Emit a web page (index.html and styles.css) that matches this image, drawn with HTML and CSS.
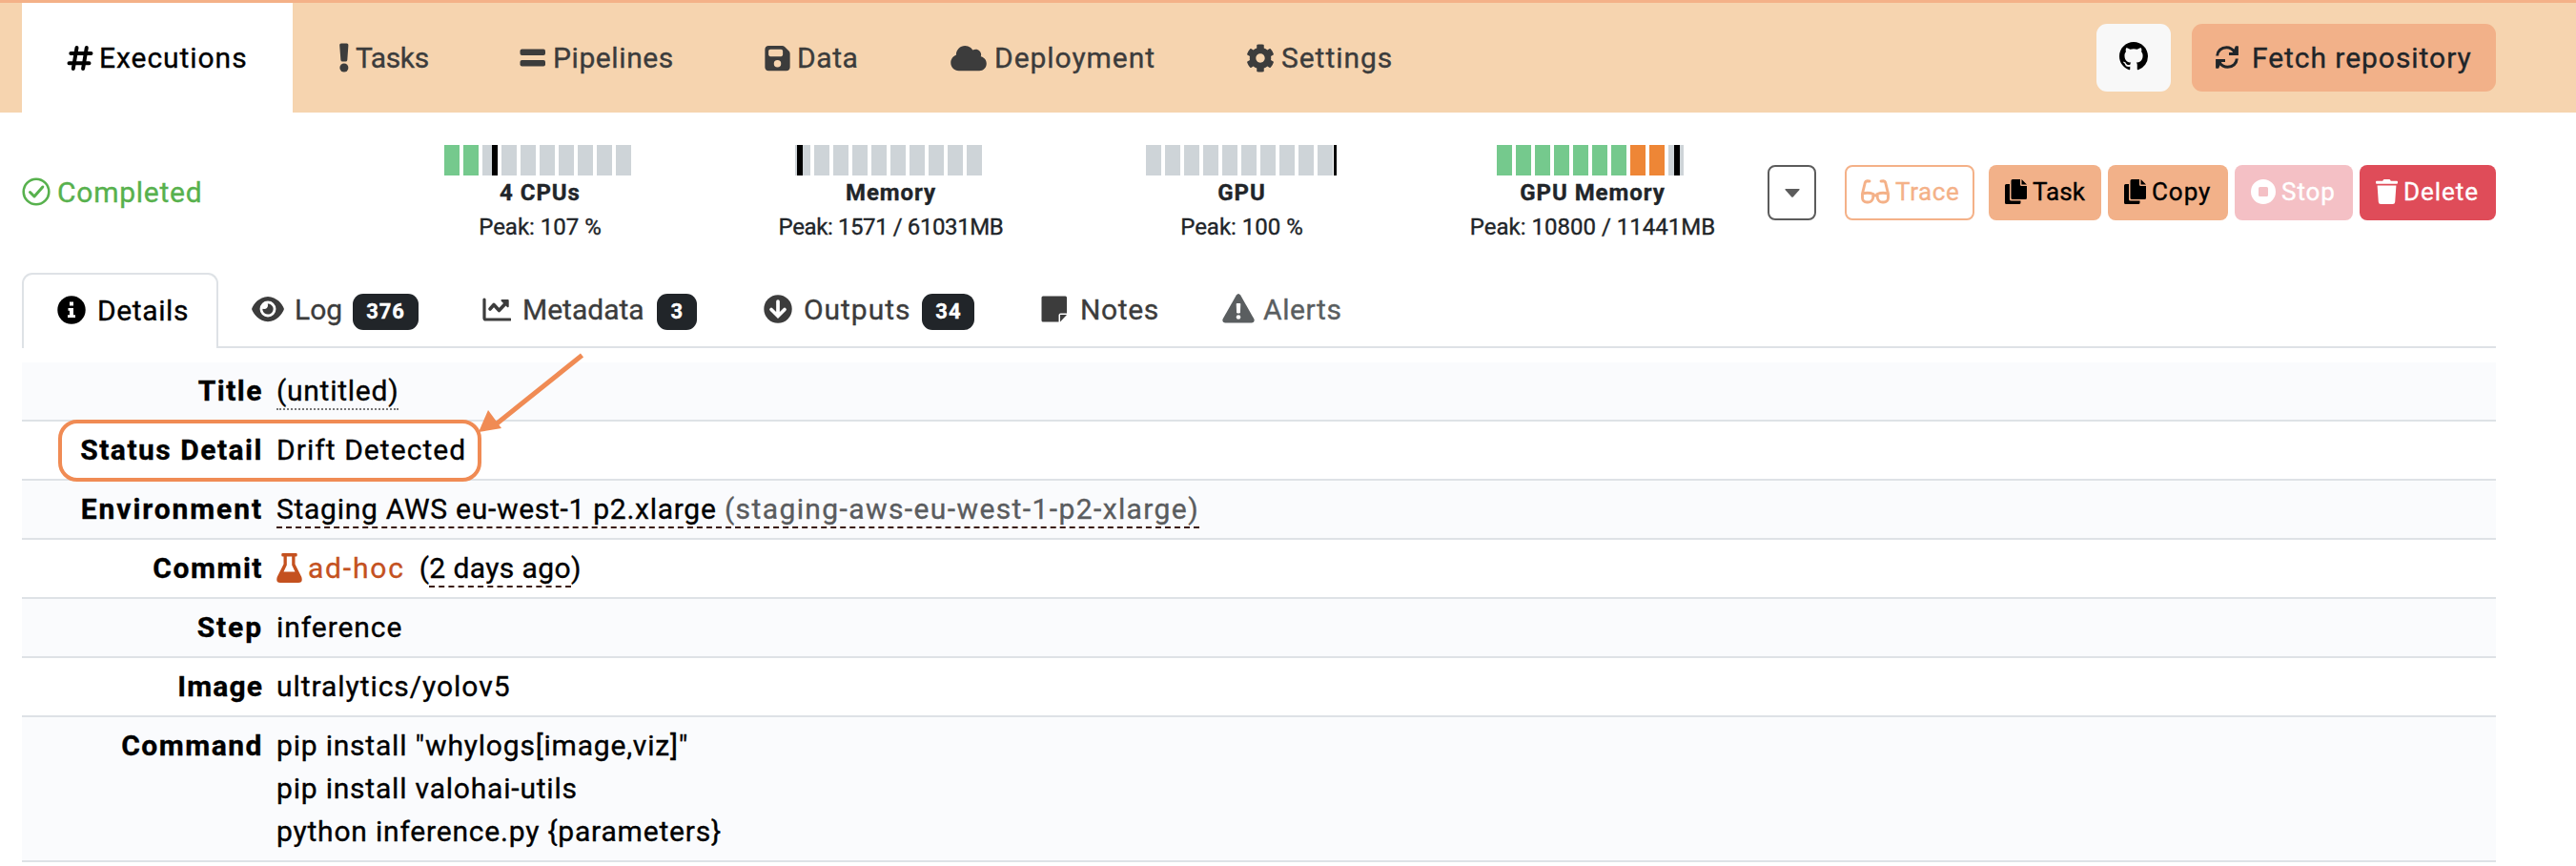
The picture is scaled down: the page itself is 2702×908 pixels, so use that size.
FILE: index.html
```
<!DOCTYPE html>
<html lang="en">
<head>
<meta charset="utf-8">
<title>Execution details</title>
<link rel="stylesheet" href="styles.css">
</head>
<body>
<header class="header">
  <nav class="nav">
    <a class="nav-item active w-exec"><svg width="28" height="30" viewBox="0 0 28 30" fill="none" stroke="currentColor" stroke-width="4" stroke-linecap="round"><path d="M10.5 4 6.8 26M20.8 4 17.1 26M4.3 10H25.5M2.5 20.3H23.5"/></svg><span>Executions</span></a>
    <a class="nav-item w-tasks"><svg width="12" height="31" viewBox="0 0 12 31" fill="currentColor"><path d="M3 .5h5.600a1.800 1.800 0 0 1 1.800 2L9.300 18a1.800 1.800 0 0 1-1.800 1.500H4.200A1.800 1.800 0 0 1 2.400 18L1.200 2.500A1.800 1.800 0 0 1 3 .5z"/><circle cx="5.900" cy="26" r="4.500"/></svg><span class="tight">Tasks</span></a>
    <a class="nav-item w-pipe"><svg width="28" height="30" viewBox="0 0 28 30" fill="currentColor"><rect x=".5" y="5.500" width="26.500" height="6.500" rx="2"/><rect x=".5" y="17" width="26.500" height="6.500" rx="2"/></svg><span class="snug">Pipelines</span></a>
    <a class="nav-item w-data"><svg width="27" height="30" viewBox="0 0 448 512" fill="currentColor"><path d="M64 32C28.700 32 0 60.700 0 96V416c0 35.300 28.700 64 64 64H384c35.300 0 64-28.700 64-64V173.300c0-17-6.700-33.300-18.700-45.300L352 50.700C340 38.700 323.700 32 306.700 32H64zm0 96c0-17.700 14.300-32 32-32H288c17.700 0 32 14.300 32 32v64c0 17.700-14.300 32-32 32H96c-17.700 0-32-14.300-32-32V128zM224 288a64 64 0 1 1 0 128 64 64 0 1 1 0-128z" fill-rule="evenodd"/></svg><span class="snug">Data</span></a>
    <a class="nav-item w-deploy"><svg width="38" height="30" viewBox="0 0 640 512" fill="currentColor"><path d="M0 336c0 79.500 64.500 144 144 144H512c70.700 0 128-57.300 128-128c0-61.900-44-113.600-102.400-125.400c4.100-10.700 6.400-22.400 6.400-34.600c0-53-43-96-96-96c-19.700 0-38.100 6-53.300 16.200C367 64.200 315.300 32 256 32C167.600 32 96 103.600 96 192c0 2.700 .1 5.400 .2 8.100C40.200 219.800 0 273.200 0 336z"/></svg><span>Deployment</span></a>
    <a class="nav-item w-settings"><svg width="30" height="30" viewBox="0 0 512 512" fill="currentColor"><path d="M487.400 315.700l-42.600-24.600c4.300-23.200 4.300-47 0-70.200l42.600-24.600c4.900-2.800 7.100-8.600 5.500-14-11.100-35.600-30-67.800-54.700-94.600-3.800-4.100-10-5.100-14.800-2.300L380.800 110c-17.900-15.400-38.500-27.300-60.800-35.100V25.800c0-5.600-3.900-10.500-9.400-11.700-36.700-8.200-74.300-7.800-109.200 0-5.500 1.200-9.400 6.100-9.400 11.700V75c-22.200 7.900-42.800 19.800-60.800 35.100L88.700 85.500c-4.900-2.800-11-1.900-14.800 2.300-24.700 26.700-43.600 58.900-54.700 94.600-1.700 5.400.6 11.200 5.500 14L67.300 221c-4.300 23.200-4.300 47 0 70.200l-42.600 24.600c-4.900 2.800-7.100 8.600-5.500 14 11.100 35.600 30 67.800 54.700 94.600 3.800 4.100 10 5.100 14.800 2.300l42.600-24.600c17.900 15.400 38.500 27.300 60.800 35.100v49.200c0 5.600 3.900 10.500 9.400 11.700 36.700 8.200 74.300 7.800 109.200 0 5.500-1.200 9.400-6.100 9.400-11.700v-49.200c22.200-7.900 42.800-19.800 60.800-35.100l42.600 24.600c4.900 2.800 11 1.900 14.800-2.300 24.700-26.700 43.600-58.900 54.700-94.600 1.500-5.500-.7-11.300-5.600-14.100zM256 336c-44.100 0-80-35.900-80-80s35.900-80 80-80 80 35.900 80 80-35.900 80-80 80z"/></svg><span>Settings</span></a>
  </nav>
  <div class="header-actions">
    <a class="github"><svg width="30" height="30" viewBox="0 0 16 16" fill="#000"><path d="M8 0C3.580 0 0 3.580 0 8c0 3.540 2.290 6.530 5.470 7.590.4.07.55-.17.55-.38 0-.19-.01-.82-.01-1.490-2.010.37-2.530-.49-2.690-.94-.09-.23-.48-.94-.82-1.130-.28-.15-.68-.52-.01-.53.63-.01 1.080.58 1.230.82.72 1.210 1.870.87 2.330.66.07-.52.28-.87.51-1.070-1.780-.2-3.640-.89-3.640-3.950 0-.87.31-1.590.82-2.150-.08-.2-.36-1.020.08-2.120 0 0 .67-.21 2.200.82.64-.18 1.320-.27 2-.27s1.360.09 2 .27c1.530-1.040 2.200-.82 2.200-.82.44 1.100.16 1.920.08 2.120.51.56.82 1.270.82 2.150 0 3.070-1.870 3.750-3.650 3.950.29.25.54.73.54 1.480 0 1.070-.01 1.930-.01 2.200 0 .21.15.46.55.38A8.010 8.010 0 0 0 16 8c0-4.420-3.580-8-8-8z"/></svg></a>
    <button class="fetch"><svg width="26" height="26" viewBox="0 0 26 26" fill="none" stroke="currentColor" stroke-width="3"><path d="M2.700 11.500C3 6.500 7 2.700 12.500 2.700c4 0 6.500 2 8.700 5M23.300 14.500C23 19.500 19 23.300 13.500 23.300c-4 0-6.500-2-8.700-5"/><path d="M22 1.500h2.700V11H15V8.300h3.500zM4 24.500H1.300V15H11v2.700H7.500z" fill="currentColor" stroke="none"/><path d="M15 9.500h8.200V1.500M11 16.500H2.800v8"/></svg><span>Fetch repository</span></button>
  </div>
</header>

<main class="content">
  <section class="status">
    <div class="state"><svg width="30" height="30" viewBox="0 0 30 30" fill="none" stroke="currentColor" stroke-width="2.600"><circle cx="15" cy="15" r="13.300"/><path d="M8.500 15.500 13 20l8.800-10" stroke-width="3" stroke-linecap="round" stroke-linejoin="round"/></svg><span class="snug">Completed</span></div>
    <div class="metric">
      <div class="meter"><i class="ok"></i><i class="ok"></i><i></i><i></i><i></i><i></i><i></i><i></i><i></i><i></i><b class="peak" style="left:50px"></b></div>
      <strong>4 CPUs</strong><span class="flat">Peak: 107 %</span>
    </div>
    <div class="metric">
      <div class="meter"><i></i><i></i><i></i><i></i><i></i><i></i><i></i><i></i><i></i><i></i><b class="peak" style="left:2px"></b></div>
      <strong>Memory</strong><span class="tight">Peak: 1571 / 61031MB</span>
    </div>
    <div class="metric">
      <div class="meter"><i></i><i></i><i></i><i></i><i></i><i></i><i></i><i></i><i></i><i></i><b class="peak full" style="left:197px"></b></div>
      <strong>GPU</strong><span class="flat">Peak: 100 %</span>
    </div>
    <div class="metric">
      <div class="meter"><i class="ok"></i><i class="ok"></i><i class="ok"></i><i class="ok"></i><i class="ok"></i><i class="ok"></i><i class="ok"></i><i class="warn"></i><i class="warn"></i><i></i><b class="peak" style="left:186px"></b></div>
      <strong>GPU Memory</strong><span class="flat">Peak: 10800 / 11441MB</span>
    </div>
    <div class="actions">
      <button class="btn toggle"><svg width="16" height="9" viewBox="0 0 16 9" fill="currentColor"><path d="M1 0h14q1 0 .5 1L9 8.200q-1 1-2 0L.5 1Q0 0 1 0z"/></svg></button>
      <button class="btn trace"><svg width="30" height="26" viewBox="0 0 30 26" fill="none" stroke="currentColor" stroke-width="2.900" stroke-linecap="round" stroke-linejoin="round"><path d="M9 2 6.500 1.800Q4.800 1.900 4.300 3.500L1.500 15v4.500a4.500 4.500 0 0 0 4.500 4.500h1.500c2.500 0 4.500-2 5-4l.6-4.500C9 14 5 14 1.600 15.200M21 2l2.500-.2q1.700.1 2.200 1.700L28.500 15v4.500a4.500 4.500 0 0 1-4.500 4.500h-1.500c-2.500 0-4.500-2-5-4l-.6-4.500c4.100-1.500 8.100-1.500 11.500-.3M13 17h4"/></svg><span class="snug">Trace</span></button>
      <button class="btn peach task"><svg width="23" height="26" viewBox="0 0 23 26" fill="currentColor"><path d="M8 0h8v5.500q0 1.500 1.500 1.500H23v12.500q0 1.500-1.500 1.500H8q-1.500 0-1.500-1.500v-18Q6.500 0 8 0zM17.500 0 23 5.500h-5.500zM1.500 5H5v16q0 1.500 1.500 1.500h10v2q0 1.500-1.500 1.500H1.500Q0 26 0 24.500v-18Q0 5 1.500 5z"/></svg><span class="flat">Task</span></button>
      <button class="btn peach copy"><svg width="23" height="26" viewBox="0 0 23 26" fill="currentColor"><path d="M8 0h8v5.500q0 1.500 1.500 1.500H23v12.500q0 1.500-1.500 1.500H8q-1.500 0-1.500-1.500v-18Q6.500 0 8 0zM17.500 0 23 5.500h-5.500zM1.500 5H5v16q0 1.500 1.500 1.500h10v2q0 1.500-1.500 1.500H1.500Q0 26 0 24.500v-18Q0 5 1.500 5z"/></svg><span>Copy</span></button>
      <button class="btn stop"><svg width="26" height="26" viewBox="0 0 26 26" fill="currentColor"><path fill-rule="evenodd" d="M13 0a13 13 0 1 1 0 26 13 13 0 0 1 0-26zM9.500 8Q8 8 8 9.500v7Q8 18 9.500 18h7q1.500 0 1.500-1.500v-7Q18 8 16.500 8z"/></svg><span>Stop</span></button>
      <button class="btn delete"><svg width="23" height="26" viewBox="0 0 23 26" fill="currentColor"><path d="M7.500 1.200Q8 0 9 0h5q1 0 1.500 1.200l.3.600H22q1 0 1 1v1q0 1-1 1H1q-1 0-1-1v-1q0-1 1-1h6.200zM1.600 6.500h19.800l-1.200 17.300Q20 26 17.800 26H5.200Q3 26 2.800 23.800z"/></svg><span>Delete</span></button>
    </div>
  </section>

  <div class="tabs">
    <a class="tab active w-details"><svg width="30" height="30" viewBox="0 0 30 30"><circle cx="15" cy="15" r="14.700" fill="currentColor"/><path d="M13 6.500h4v4h-4zM11.500 13H17v7.200h2V23h-8v-2.800h2v-4.400h-1.500z" fill="#fff"/></svg><span class="snug">Details</span></a>
    <a class="tab w-log"><svg width="34" height="30" viewBox="0 0 576 512" fill="currentColor"><path d="M288 32c-80.800 0-145.500 36.800-192.600 80.600C48.600 156 17.300 208 2.500 243.700c-3.300 7.900-3.300 16.700 0 24.600C17.300 304 48.600 356 95.400 399.400C142.500 443.200 207.200 480 288 480s145.500-36.800 192.600-80.600c46.800-43.500 78.100-95.400 93-131.100c3.300-7.900 3.300-16.700 0-24.600c-14.900-35.700-46.200-87.700-93-131.100C433.500 68.800 368.800 32 288 32z"/><circle cx="288" cy="256" r="144" fill="#fff"/><path d="M288 192c0 35.300-28.700 64-64 64c-7.100 0-13.900-1.200-20.300-3.300c-5.500-1.800-11.900 1.600-11.700 7.400c.3 6.900 1.300 13.800 3.200 20.700c13.700 51.200 66.400 81.600 117.600 67.900s81.600-66.400 67.900-117.600c-11.100-41.500-47.800-69.400-88.600-71.100c-5.800-.2-9.200 6.100-7.400 11.700c2.100 6.400 3.300 13.200 3.300 20.300z"/></svg><span class="flat">Log</span><b class="badge">376</b></a>
    <a class="tab w-meta"><svg width="30" height="30" viewBox="0 0 30 30" fill="none" stroke="currentColor" stroke-width="3.200" stroke-linecap="round" stroke-linejoin="round"><path d="M2 5v19.500Q2 26 3.500 26H29"/><path d="M8 15l4-4.500 5.500 6L24 9.500" stroke-width="3.600"/><path d="M20.500 6h6.200v6.200z" fill="currentColor" stroke-width="2"/></svg><span class="flat">Metadata</span><b class="badge">3</b></a>
    <a class="tab w-out"><svg width="30" height="30" viewBox="0 0 30 30"><circle cx="15" cy="15" r="14.700" fill="currentColor"/><path d="M15 7v15M8 15.500l7 7 7-7" fill="none" stroke="#fff" stroke-width="3.700" stroke-linecap="round"/></svg><span>Outputs</span><b class="badge">34</b></a>
    <a class="tab w-notes"><svg width="28" height="30" viewBox="0 0 28 30" fill="currentColor"><path d="M2 1.500h23.500Q27 1.500 27 3v16.500h-6.500Q18.500 19.500 18.500 21.500V28.500H2Q.5 28.500.5 27V3Q.5 1.500 2 1.500zM20 21h7L20 28.500z"/></svg><span class="snug">Notes</span></a>
    <a class="tab alerts"><svg width="34" height="31" viewBox="0 0 34 31"><path d="M14.800 1.600Q17-1.400 19.200 1.600L33.400 26.500Q34.600 30 31 30.500H3Q-.6 30 .6 26.500z" fill="currentColor"/><path d="M15.200 10.500h3.600l-.4 9.500h-2.800z" fill="#fff" stroke="#fff" stroke-linejoin="round"/><circle cx="17" cy="24.500" r="2.300" fill="#fff"/></svg><span class="snug">Alerts</span></a>
  </div>

  <dl class="details">
    <div class="row"><dt>Title</dt><dd><span class="dotted">(untitled)</span></dd></div>
    <div class="row"><dt>Status Detail</dt><dd class="drift">Drift Detected</dd></div>
    <div class="row"><dt class="wider">Environment</dt><dd><span class="dashed"><span class="env">Staging AWS eu-west-1 p2.xlarge</span> <span class="slug">(staging-aws-eu-west-1-p2-xlarge)</span></span></dd></div>
    <div class="row"><dt>Commit</dt><dd class="commit"><span class="adhoc"><svg width="27" height="31" viewBox="0 0 27 31" fill="currentColor"><path fill-rule="evenodd" d="M6.500 0h14Q21.700 0 21.700 1.300v1Q21.700 3.600 20.500 3.600H19.500v8l6.800 13.500Q28 31 23 31H4Q-1 31 .7 25.100L7.500 11.600v-8h-1Q5.300 3.600 5.300 2.300v-1Q5.300 0 6.500 0zM10.800 3.600v9L7.500 19.500h12l-3.300-6.900v-9z"/></svg><span class="wide">ad-hoc</span></span><span class="when">(<span class="dashed">2 days ago</span>)</span></dd></div>
    <div class="row"><dt class="wider">Step</dt><dd>inference</dd></div>
    <div class="row"><dt class="image">Image</dt><dd>ultralytics/yolov5</dd></div>
    <div class="row multi"><dt>Command</dt><dd class="command">pip install "whylogs[image,viz]"<br>pip install valohai-utils<br>python inference.py {parameters}</dd></div>
  </dl>
</main>

<svg class="callout" width="560" height="150" viewBox="0 0 560 150"><rect x="13" y="73" width="440" height="61" rx="18" fill="none" stroke="#f08b54" stroke-width="4"/><path d="M560.500 3.500 470 76" fill="none" stroke="#f08b54" stroke-width="5"/><path d="M452 84 462 61 476 80z" fill="#f08b54"/></svg>
</body>
</html>
```
FILE: styles.css
```
* { box-sizing: border-box; }
body {
  margin: 0;
  position: relative;
  width: 2702px;
  height: 908px;
  overflow: hidden;
  background: #fff;
  color: #000;
  font: 30px/45px Roboto, "Liberation Sans", sans-serif;
  letter-spacing: .95px;
  -webkit-text-stroke: .35px currentColor;
}
svg { display: block; flex: none; }
span { white-space: nowrap; }
button { font: inherit; letter-spacing: inherit; border: 0; padding: 0; }

/* tracking variants */
.tight { letter-spacing: -.4px; }
.flat { letter-spacing: 0; }
.snug { letter-spacing: .6px; }
.wide { letter-spacing: 1.8px; }

.header {
  display: flex;
  justify-content: space-between;
  height: 118px;
  padding: 0 84px 0 23px;
  border-top: 3px solid #f4b188;
  background: #f6d4af;
}
.nav { display: flex; }
.nav-item {
  display: flex;
  align-items: center;
  gap: 7px;
  padding-left: 48px;
  color: #3c3c3c;
}
.nav-item.active { background: #fff; color: #000; padding-left: 47px; gap: 6px; }
.w-exec { width: 284px; }
.w-tasks { width: 190px; }
.w-pipe { width: 257px; }
.w-data { width: 194px; }
.w-deploy { width: 311px; }
.w-deploy.nav-item { gap: 8px; padding-left: 49px; }
.w-settings { width: 251px; }
.w-tasks.nav-item { gap: 6px; }

.header-actions { display: flex; align-items: center; gap: 22px; }
.github, .fetch {
  display: flex;
  align-items: center;
  height: 71px;
  border-radius: 11px;
}
.github { width: 78px; justify-content: center; background: #f8f8f8; padding-bottom: 3px; }
.fetch { width: 319px; padding: 0 0 1px 24px; gap: 13px; background: #f2b189; color: #212529; }

.content { width: 2595px; margin-left: 23px; }
.status {
  display: grid;
  grid-template-columns: 359px repeat(4, 368px) 1fr;
  height: 168px;
  padding-top: 34px;
}
.state {
  display: flex;
  align-items: center;
  gap: 7px;
  height: 58px;
  margin-top: 20px;
  color: #57b14d;
}
.state .snug { letter-spacing: .75px; }
.metric {
  display: flex;
  flex-direction: column;
  align-items: center;
  font-size: 24px;
  line-height: 36px;
  color: #212529;
}
.metric strong, .metric span { padding-left: 1px; }
.meter { position: relative; display: flex; gap: 4px; width: 200px; height: 32px; }
.meter i { width: 16px; background: #ced4d8; }
.meter .ok { background: #75c98d; }
.meter .warn { background: #ee8636; }
.peak { position: absolute; top: 0; width: 6px; height: 32px; background: #000; }
.peak.full { width: 3px; }

.actions { display: flex; justify-content: flex-end; gap: 7px; margin-top: 21px; }
.btn {
  display: flex;
  align-items: center;
  height: 58px;
  padding: 0 0 1px 17px;
  gap: 6px;
  border-radius: 8px;
  font-size: 26px;
  color: #000;
}
.btn svg { margin-bottom: 2px; }
.toggle { width: 51px; padding: 0 0 0 16px; margin-right: 23px; border: 2px solid #5c5c5c; background: #fff; color: #5c5c5c; }
.toggle svg { margin: 0; }
.trace { width: 136px; margin-right: 8px; padding-left: 15px; border: 2px solid #f4b188; background: #fff; color: #f4b188; }
.peach { background: #f2b189; }
.task { width: 118px; }
.copy { width: 126px; }
.stop { width: 124px; background: #f4c0c5; color: #fff; }
.delete { width: 143px; background: #df4c59; color: #fff; }

.tabs {
  display: flex;
  height: 79px;
  box-shadow: inset 0 -2px #dee2e6;
}
.tab {
  display: flex;
  align-items: center;
  gap: 12px;
  padding: 0 35px 2px;
  color: #3c3c3c;
}
.tab.active {
  border: 2px solid #dee2e6;
  border-bottom: 0;
  border-radius: 11px 11px 0 0;
  background: #fff;
  color: #000;
}
.tab svg { margin-bottom: 2px; }
.w-details { width: 206px; }
.w-log { width: 243px; gap: 11px; }
.w-meta { width: 294px; padding-left: 34px; }
.w-out { width: 291px; }
.w-notes { width: 191px; }
.w-notes { gap: 13px; }
.alerts { color: #5a5e60; gap: 9px; padding-left: 34px; }
.badge {
  margin: 4px 0 0 auto;
  height: 38px;
  padding: 0 14px;
  border-radius: 11px;
  background: #212529;
  color: #fff;
  font-size: 22px;
  line-height: 38px;
}

.details { margin: 15px 0 0; }
.row {
  display: grid;
  grid-template-columns: 253px 1fr;
  column-gap: 14px;
  padding: 6.5px 0 8.5px;
  height: 62px;
  border-bottom: 2px solid #dee2e6;
}
.row:nth-child(odd) { background: #fafbfd; }
.row.multi { height: 152px; }
dt { font-weight: 700; text-align: right; letter-spacing: 1.5px; }
.wider { letter-spacing: 1.9px; }
.image { letter-spacing: 1.1px; }
dd { margin: 0; }
.dotted { letter-spacing: .75px; padding-bottom: 1px; border-bottom: 2px dotted #777; }
.dashed { padding-bottom: 1px; border-bottom: 2px dashed #3a1a0a; }
.drift { letter-spacing: 1.05px; }
.env { letter-spacing: .72px; }
.slug { letter-spacing: 1.4px; }
.slug { color: #5a5c5e; }
.commit { display: flex; gap: 15px; }
.adhoc { display: flex; gap: 6px; color: #c4511f; }
.adhoc svg { margin-top: 7px; }
.when { letter-spacing: .4px; }
.command { letter-spacing: .8px; }

/* annotation drawn above the table */
.callout { position: absolute; left: 50px; top: 369px; overflow: visible; }
```
